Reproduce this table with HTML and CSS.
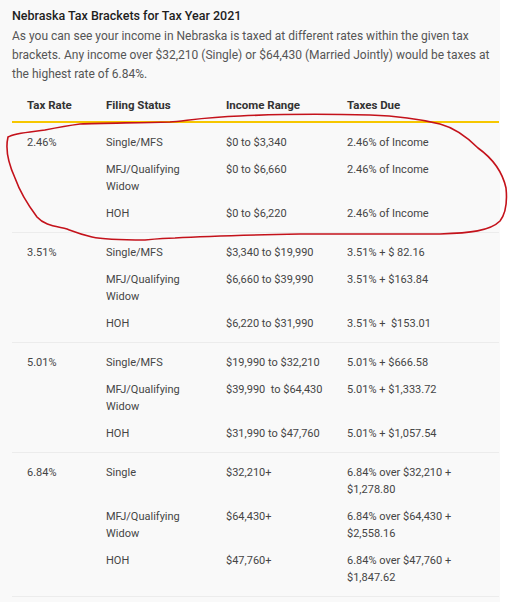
FILE: index.html
```html
<!DOCTYPE html>
<html lang="en">
<head>
<meta charset="utf-8">
<title>Nebraska Tax Brackets for Tax Year 2021</title>
<link rel="stylesheet" href="styles.css">
</head>
<body>
<div class="page">
  <h2 class="title">Nebraska Tax Brackets for Tax Year 2021</h2>
  <p class="intro">As you can see your income in Nebraska is taxed at different rates within the given tax brackets. Any income over $32,210 (Single) or $64,430 (Married Jointly) would be taxes at the highest rate of 6.84%.</p>

  <div class="table">
    <div class="head">
      <div>Tax Rate</div>
      <div>Filing Status</div>
      <div>Income Range</div>
      <div>Taxes Due</div>
    </div>

    <div class="group">
      <div class="rate">2.46%</div>
      <div class="status">Single/MFS</div><div class="range">$0 to $3,340</div><div class="due">2.46% of Income</div>
      <div class="status">MFJ/Qualifying Widow</div><div class="range">$0 to $6,660</div><div class="due">2.46% of Income</div>
      <div class="status">HOH</div><div class="range">$0 to $6,220</div><div class="due">2.46% of Income</div>
    </div>

    <div class="group">
      <div class="rate">3.51%</div>
      <div class="status">Single/MFS</div><div class="range">$3,340 to $19,990</div><div class="due">3.51% + $ 82.16</div>
      <div class="status">MFJ/Qualifying Widow</div><div class="range">$6,660 to $39,990</div><div class="due">3.51% + $163.84</div>
      <div class="status">HOH</div><div class="range">$6,220 to $31,990</div><div class="due">3.51% + &nbsp;$153.01</div>
    </div>

    <div class="group">
      <div class="rate">5.01%</div>
      <div class="status">Single/MFS</div><div class="range">$19,990 to $32,210</div><div class="due">5.01% + $666.58</div>
      <div class="status">MFJ/Qualifying Widow</div><div class="range">$39,990 &nbsp;to $64,430</div><div class="due">5.01% + $1,333.72</div>
      <div class="status">HOH</div><div class="range">$31,990 to $47,760</div><div class="due">5.01% + $1,057.54</div>
    </div>

    <div class="group">
      <div class="rate">6.84%</div>
      <div class="status">Single</div><div class="range">$32,210+</div><div class="due">6.84% over $32,210 + $1,278.80</div>
      <div class="status">MFJ/Qualifying Widow</div><div class="range">$64,430+</div><div class="due">6.84% over $64,430 + $2,558.16</div>
      <div class="status">HOH</div><div class="range">$47,760+</div><div class="due">6.84% over $47,760 + $1,847.62</div>
    </div>
  </div>
</div>

<svg class="annotation" width="509" height="602" viewBox="0 0 509 602" aria-hidden="true">
  <path d="M45 130 C30 132 14 133 8 137 C5 150 9 165 15 178 C20 192 28 205 37 217 C44 225 55 226 67 229 C75 232 80 234 92 237 C105 240 125 240 145 240 C155 239 165 238 175 238 C210 236 250 235 300 234 C350 234 400 234 440 234 C470 233 490 231 500 221 C507 212 507 198 506 188 C502 170 492 158 478 148 C468 138 455 128 440 124 C420 119 400 116 370 115 C330 114 280 114 240 116 C205 117 185 121 170 122 C130 123 100 123 80 124 C65 126 55 128 45 130" />
</svg>
</body>
</html>
```

FILE: styles.css
```css
html, body {
  margin: 0;
  padding: 0;
  background: #ffffff;
}

body {
  width: 509px;
  height: 602px;
  overflow: hidden;
  position: relative;
  font-family: Roboto, "Liberation Sans", Arial, sans-serif;
}

.page {
  width: 500px;
  box-sizing: border-box;
  min-height: 602px;
  background: #f9f9f9;
  padding: 6px 1px 0 12px;
}

.title {
  margin: 0;
  font-size: 12.5px;
  font-weight: 500;
  line-height: 20px;
  color: #1e1e1e;
}

.intro {
  margin: 1px 0 0 0;
  font-size: 12px;
  line-height: 19px;
  color: #555555;
}

.table {
  margin-top: 13px;
}

.head,
.group {
  display: grid;
  grid-template-columns: 79px 120px 121px 125px;
  padding-left: 15px;
}

.head {
  font-size: 11.5px;
  font-weight: 700;
  color: #333333;
  line-height: 17px;
  padding-bottom: 7px;
  border-bottom: 2px solid #f6c700;
}

.group {
  padding-top: 6px;
  padding-bottom: 5px;
  border-bottom: 1px solid #ececec;
  font-size: 11px;
  line-height: 17px;
  color: #454545;
}

.group > div {
  padding: 5px 0;
}

.rate {
  grid-column: 1;
  grid-row: 1;
}

.status {
  grid-column: 2;
  padding-right: 20px !important;
}

.range {
  grid-column: 3;
}

.due {
  grid-column: 4;
}

.annotation {
  position: absolute;
  left: 0;
  top: 0;
  pointer-events: none;
}

.annotation path {
  fill: none;
  stroke: #c4121b;
  stroke-width: 1.6;
  stroke-linecap: round;
  stroke-linejoin: round;
}
```
